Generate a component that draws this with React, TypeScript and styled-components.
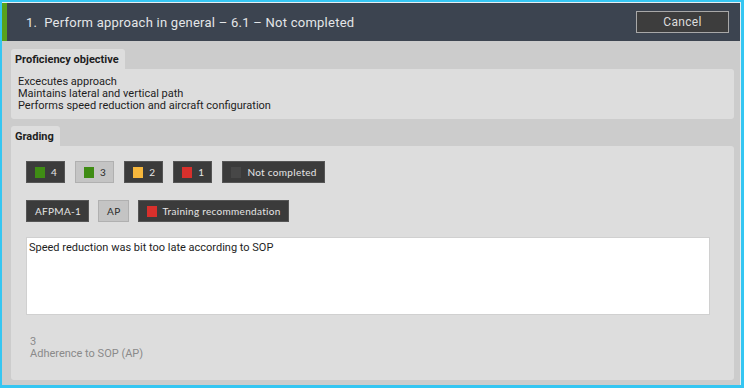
import styled, { createGlobalStyle } from "styled-components";

const GlobalStyle = createGlobalStyle`
  html, body {
    margin: 0;
    padding: 0;
    background: #35c6f2;
  }
  * {
    box-sizing: border-box;
  }
`;

const Frame = styled.div`
  width: 744px;
  height: 388px;
  padding: 2px 3px 3px 2px;
  background: #35c6f2;
`;

const Dialog = styled.div`
  height: 100%;
  display: flex;
  flex-direction: column;
  background: #cccccc;
  border-top: 1px solid #e8eef2;
  border-right: 1px solid #e8eef2;
  font-family: Roboto, "Noto Sans", sans-serif;
`;

const Header = styled.div`
  height: 38px;
  flex: none;
  display: flex;
  align-items: center;
  justify-content: space-between;
  padding: 0 11px 0 19px;
  background: #3c4450;
  border-left: 5px solid #58a21c;
`;

const Title = styled.h1`
  margin: 0;
  font-size: 13px;
  font-weight: 400;
  color: #e4e6e8;
  letter-spacing: 0.25px;
`;

const CancelButton = styled.button`
  width: 93px;
  height: 22px;
  background: #3d3d3d;
  border: 1px solid #a8a8a8;
  color: #dcdcdc;
  font-family: Roboto, sans-serif;
  font-size: 12px;
  letter-spacing: 0.3px;
  padding: 0;
`;

const Body = styled.div`
  flex: 1;
  display: flex;
  flex-direction: column;
  padding: 8px 6px 5px 9px;
`;

const Section = styled.section<{ $grow?: boolean }>`
  display: flex;
  flex-direction: column;
  flex: ${(p) => (p.$grow ? 1 : "none")};
  & + & {
    margin-top: 7px;
  }
`;

const Tab = styled.div`
  align-self: flex-start;
  height: 20px;
  padding: 0 6px 0 4px;
  display: flex;
  align-items: center;
  background: #dddddd;
  border-radius: 3px 3px 0 0;
  font-size: 11px;
  font-weight: 700;
  color: #1e1e1e;
`;

const Panel = styled.div<{ $grow?: boolean }>`
  flex: ${(p) => (p.$grow ? 1 : "none")};
  background: #dddddd;
  border-radius: 0 3px 3px 3px;
`;

const ObjectiveList = styled.div`
  padding: 7px;
  font-size: 11px;
  line-height: 12px;
  color: #1e1e1e;
`;

const GradingBody = styled.div`
  padding: 15px 24px 0 15px;
  display: flex;
  flex-direction: column;
`;

const ButtonRow = styled.div<{ $gap: number }>`
  display: flex;
  gap: ${(p) => p.$gap}px;
  margin-bottom: 17px;
`;

const GradeButton = styled.button<{ $active?: boolean }>`
  height: 22px;
  display: flex;
  align-items: center;
  gap: 6px;
  padding: 0 7px 0 8px;
  background: ${(p) => (p.$active ? "#c4c4c4" : "#3b3b3b")};
  border: 1px solid ${(p) => (p.$active ? "#b0b0b0" : "#555555")};
  color: ${(p) => (p.$active ? "#2a2a2a" : "#e6e6e6")};
  font-family: Lato, "Noto Sans", sans-serif;
  font-size: 10px;
  letter-spacing: 0.3px;
`;

const Swatch = styled.span<{ $color: string }>`
  width: 10px;
  height: 11px;
  flex: none;
  background: ${(p) => p.$color};
`;

const Notes = styled.div`
  height: 78px;
  margin-top: -2px;
  background: #ffffff;
  border: 1px solid #d0d0d0;
  padding: 3px 2px;
  font-size: 11px;
  line-height: 14px;
  color: #1e1e1e;
`;

const Summary = styled.div`
  margin-top: 21px;
  padding-left: 4px;
  font-size: 11px;
  line-height: 12px;
  color: #8a8a8a;
`;

const grades = [
  { label: "4", color: "#3f8c14" },
  { label: "3", color: "#3f8c14", active: true },
  { label: "2", color: "#f6b73c" },
  { label: "1", color: "#d8302c" },
  { label: "Not completed", color: "#474747" },
];

const App = () => {
  return (
    <>
      <GlobalStyle />
      <Frame>
        <Dialog>
          <Header>
            <Title>1.&nbsp; Perform approach in general – 6.1 – Not completed</Title>
            <CancelButton>Cancel</CancelButton>
          </Header>
          <Body>
            <Section>
              <Tab>Proficiency objective</Tab>
              <Panel>
                <ObjectiveList>
                  Excecutes approach
                  <br />
                  Maintains lateral and vertical path
                  <br />
                  Performs speed reduction and aircraft configuration
                </ObjectiveList>
              </Panel>
            </Section>
            <Section $grow>
              <Tab>Grading</Tab>
              <Panel $grow>
                <GradingBody>
                  <ButtonRow $gap={10}>
                    {grades.map((g) => (
                      <GradeButton key={g.label} $active={g.active}>
                        <Swatch $color={g.color} />
                        {g.label}
                      </GradeButton>
                    ))}
                  </ButtonRow>
                  <ButtonRow $gap={9}>
                    <GradeButton>AFPMA-1</GradeButton>
                    <GradeButton $active>AP</GradeButton>
                    <GradeButton>
                      <Swatch $color="#d8302c" />
                      Training recommendation
                    </GradeButton>
                  </ButtonRow>
                  <Notes>Speed reduction was bit too late according to SOP</Notes>
                  <Summary>
                    3
                    <br />
                    Adherence to SOP (AP)
                  </Summary>
                </GradingBody>
              </Panel>
            </Section>
          </Body>
        </Dialog>
      </Frame>
    </>
  );
};

export default App;
